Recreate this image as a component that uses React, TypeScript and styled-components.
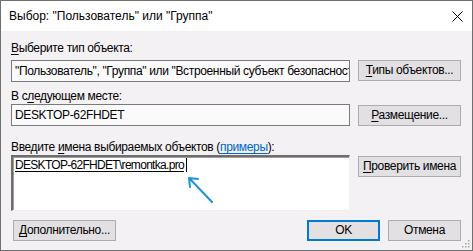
import * as React from "react";
import styled, { createGlobalStyle } from "styled-components";

const GlobalStyle = createGlobalStyle`
  html, body {
    margin: 0;
    padding: 0;
    background: #ffffff;
  }
  body {
    font-family: "Liberation Sans", Arial, sans-serif;
    font-size: 12px;
    color: #000;
  }
`;

const Window = styled.div`
  position: relative;
  width: 473px;
  height: 251px;
  box-sizing: border-box;
  border: 1px solid #6f6f6f;
  display: flex;
  flex-direction: column;
  overflow: hidden;
`;

const TitleBar = styled.div`
  height: 30px;
  flex: none;
  background: #ffffff;
  display: flex;
  align-items: center;
  justify-content: space-between;
  padding: 0 9px 0 8px;
  font-size: 12px;
`;

const Body = styled.div`
  flex: 1;
  background: #f4f1f4;
  padding: 10px 11px 0 10px;
  display: flex;
  flex-direction: column;
  letter-spacing: -0.35px;
`;

const Label = styled.div<{ $gap?: number; $below?: number }>`
  height: 15px;
  line-height: 15px;
  margin-top: ${({ $gap }) => $gap ?? 0}px;
  margin-bottom: ${({ $below }) => $below ?? 0}px;
  white-space: nowrap;
`;

const Row = styled.div`
  display: flex;
  align-items: flex-start;
  justify-content: space-between;
`;

const Field = styled.div`
  width: 339px;
  height: 22px;
  box-sizing: border-box;
  border: 1px solid #7a7a7a;
  background: #fbfafb;
  padding: 0 3px;
  line-height: 20px;
  white-space: nowrap;
  overflow: hidden;
`;

const NamesBox = styled.div`
  position: relative;
  width: 339px;
  height: 56px;
  box-sizing: border-box;
  border-style: solid;
  border-width: 2px 1px 1px 2px;
  border-color: #6d6d6d #f0f0f0 #f0f0f0 #6d6d6d;
  box-shadow: inset 1px 1px 0 #a0a0a0;
  background: #ffffff;
  padding: 1px 2px;
  line-height: 15px;
  white-space: nowrap;
`;

const Resolved = styled.span`
  letter-spacing: -0.7px;
  text-decoration: underline;
  text-underline-offset: 2px;
  border-right: 1px solid #000;
  padding-right: 2px;
`;

const Button = styled.button<{ $width?: number; $default?: boolean; $top?: number }>`
  width: ${({ $width }) => $width ?? 103}px;
  height: 21px;
  box-sizing: border-box;
  margin: ${({ $top }) => $top ?? 0}px 0 0;
  padding: 0;
  font: inherit;
  letter-spacing: inherit;
  color: #000;
  background: #e3e0e3;
  border: ${({ $default }) => ($default ? "2px solid #0078d7" : "1px solid #adadad")};
  line-height: 17px;
  text-align: center;
  white-space: nowrap;
`;

const Key = styled.span`
  text-decoration: underline;
  text-underline-offset: 2px;
`;

const Link = styled.span`
  color: #0066cc;
  text-decoration: underline;
  text-underline-offset: 2px;
`;

const BottomBar = styled.div`
  margin-top: 9px;
  display: flex;
  align-items: center;
  justify-content: space-between;
  padding-left: 2px;
`;

const ButtonGroup = styled.div`
  display: flex;
  gap: 8px;
`;

const Arrow = styled.svg`
  position: absolute;
  left: 168px;
  top: 12px;
  overflow: visible;
`;

const Grip = styled.svg`
  position: absolute;
  right: 2px;
  bottom: 2px;
`;

function CloseIcon() {
  return (
    <svg width="11" height="11" viewBox="0 0 11 11">
      <path d="M0.5 0.5 L10.5 10.5 M10.5 0.5 L0.5 10.5" stroke="#000" strokeWidth="1" />
    </svg>
  );
}

export default function App() {
  return (
    <>
      <GlobalStyle />
      <Window>
        <TitleBar>
          <span>Выбор: "Пользователь" или "Группа"</span>
          <CloseIcon />
        </TitleBar>
        <Body>
          <Label $below={4}>
            <Key>В</Key>ыберите тип объекта:
          </Label>
          <Row>
            <Field>"Пользователь", "Группа" или "Встроенный субъект безопасности"</Field>
            <Button>
              <Key>Т</Key>ипы объектов...
            </Button>
          </Row>

          <Label $gap={7}>
            В с<Key>л</Key>едующем месте:
          </Label>
          <Row>
            <Field>DESKTOP-62FHDET</Field>
            <Button $top={1}>
              <Key>Р</Key>азмещение...
            </Button>
          </Row>

          <Label $gap={14}>
            Введите <Key>и</Key>мена выбираемых объектов (<Link>примеры</Link>):
          </Label>
          <Row>
            <NamesBox>
              <Resolved>DESKTOP-62FHDET\remontka.pro</Resolved>
              <Arrow width="40" height="40" viewBox="0 0 40 40">
                <path
                  d="M31 33 L8 9 M8 9 L17 10 M8 9 L9 18"
                  stroke="#1d93d8"
                  strokeWidth="2"
                  fill="none"
                  strokeLinecap="round"
                />
              </Arrow>
            </NamesBox>
            <Button $top={1}>
              <Key>П</Key>роверить имена
            </Button>
          </Row>

          <BottomBar>
            <Button>
              <Key>Д</Key>ополнительно...
            </Button>
            <ButtonGroup>
              <Button $width={73} $default>
                OK
              </Button>
              <Button $width={73}>Отмена</Button>
            </ButtonGroup>
          </BottomBar>
        </Body>
        <Grip width="9" height="9" viewBox="0 0 9 9">
          {[
            [7, 1],
            [4, 4],
            [7, 4],
            [1, 7],
            [4, 7],
            [7, 7],
          ].map(([x, y]) => (
            <rect key={`${x}-${y}`} x={x} y={y} width="1.5" height="1.5" fill="#a8a8a8" />
          ))}
        </Grip>
      </Window>
    </>
  );
}
